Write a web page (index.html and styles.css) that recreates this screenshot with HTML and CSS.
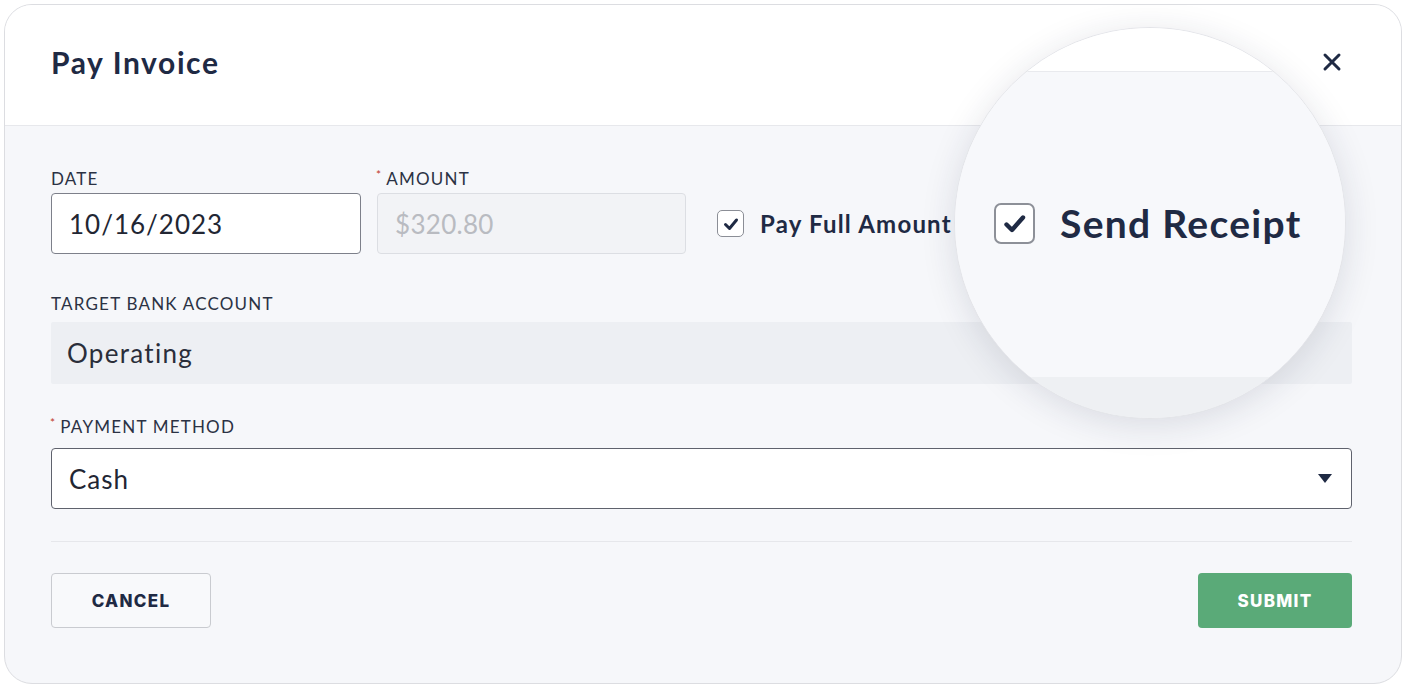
FILE: index.html
```html
<!DOCTYPE html>
<html>
<head>
<meta charset="utf-8">
<link rel="stylesheet" href="styles.css">
</head>
<body>
<div class="card">
  <header class="head">
    <h1 class="title">Pay Invoice</h1>
    <button class="close" aria-label="Close">
      <svg width="20" height="20" viewBox="0 0 20 20"><path d="M3 3L17 17M17 3L3 17" stroke="#1f2a44" stroke-width="3" stroke-linecap="round"/></svg>
    </button>
  </header>
  <main class="body">
    <div class="row1">
      <div class="field date">
        <div class="label">DATE</div>
        <div class="input">10/16/2023</div>
      </div>
      <div class="field amount">
        <div class="label"><span class="req">*</span>AMOUNT</div>
        <div class="input disabled">$320.80</div>
      </div>
      <div class="check">
        <span class="box">
          <svg width="20" height="20" viewBox="0 0 20 20"><path d="M4.5 10.5L8.5 14.5L15.5 6" fill="none" stroke="#1f2a44" stroke-width="3" stroke-linecap="round" stroke-linejoin="round"/></svg>
        </span>
        <span class="check-text">Pay Full Amount</span>
      </div>
    </div>
    <div class="field bank">
      <div class="label">TARGET BANK ACCOUNT</div>
      <div class="input readonly">Operating</div>
    </div>
    <div class="field method">
      <div class="label"><span class="req">*</span>PAYMENT METHOD</div>
      <div class="input select">
        <span>Cash</span>
        <svg width="14" height="9" viewBox="0 0 14 9"><path d="M0 0H14L7 9Z" fill="#1f2a44"/></svg>
      </div>
    </div>
    <div class="divider"></div>
    <div class="actions">
      <button class="btn cancel">CANCEL</button>
      <button class="btn submit">SUBMIT</button>
    </div>
  </main>
  <div class="magnifier">
    <div class="mag-head"></div>
    <div class="mag-body">
      <span class="mag-box">
        <svg width="30" height="30" viewBox="0 0 30 30"><path d="M6.5 15.5L12 21L23 8.5" fill="none" stroke="#1f2a44" stroke-width="4.4" stroke-linecap="round" stroke-linejoin="round"/></svg>
      </span>
      <span class="mag-text">Send Receipt</span>
    </div>
    <div class="mag-band"></div>
  </div>
</div>
</body>
</html>
```

FILE: styles.css
```css
* { box-sizing: border-box; }
html, body { margin: 0; padding: 0; background: #ffffff; }
body { font-family: Lato, "Open Sans", sans-serif; color: #1f2a44; }

.card {
  position: relative;
  margin: 4px;
  width: 1398px;
  height: 680px;
  border: 1px solid #dcdde1;
  border-radius: 28px;
  overflow: hidden;
  background: #f6f7fa;
}

.head {
  height: 121px;
  background: #ffffff;
  border-bottom: 1px solid #e7e8ec;
  display: flex;
  align-items: center;
  justify-content: space-between;
  padding: 0 59px 7px 46px;
}
.title {
  margin: 0;
  font-size: 30px;
  font-weight: 700;
  color: #1f2a44;
  letter-spacing: 1.6px;
}
.close {
  border: 0;
  background: none;
  padding: 0;
  width: 20px;
  height: 20px;
  display: flex;
}

.body {
  padding: 43px 49px 0 46px;
}

.label {
  font-size: 17px;
  line-height: 20px;
  color: #2b3244;
  letter-spacing: 1.2px;
}
.req {
  color: #c0392b;
  font-size: 12px;
  vertical-align: top;
  line-height: 12px;
  margin-right: 4px;
  margin-left: -1px;
}

.row1 {
  display: flex;
  align-items: flex-end;
}
.field .input {
  height: 61px;
  border-radius: 4px;
  display: flex;
  align-items: center;
  font-size: 26px;
  letter-spacing: 1px;
  color: #222633;
}
.date { width: 310px; }
.date .label { margin-bottom: 4px; }
.date .input {
  background: #fff;
  border: 1px solid #7d808a;
  padding-left: 17px;
}
.amount { width: 309px; margin-left: 16px; }
.amount .label { margin-bottom: 4px; }
.input.disabled {
  background: #f2f3f6;
  border: 1px solid #dcdee3;
  color: #b9bbc1;
  padding-left: 17px;
  letter-spacing: 0.3px;
}

.check {
  height: 61px;
  margin-left: 31px;
  display: flex;
  align-items: center;
}
.box {
  width: 27px;
  height: 27px;
  border: 1.5px solid #8b8e96;
  border-radius: 5px;
  background: #fff;
  display: flex;
  align-items: center;
  justify-content: center;
}
.check-text {
  margin-left: 16px;
  font-size: 24px;
  font-weight: 700;
  color: #1f2a44;
  letter-spacing: 1.2px;
}

.bank { margin-top: 40px; }
.bank .label { margin-bottom: 8px; }
.input.readonly {
  height: 62px;
  background: #edeff3;
  padding-left: 16px;
  border-radius: 2px;
  color: #2a2e3a;
  letter-spacing: 1.3px;
}

.method { margin-top: 33px; }
.method .label { margin-bottom: 11px; }
.input.select {
  background: #fff;
  border: 1px solid #5f626d;
  padding: 0 19px 0 17px;
  justify-content: space-between;
}

.divider {
  margin-top: 32px;
  height: 1px;
  background: #e6e7eb;
}

.actions {
  margin-top: 31px;
  display: flex;
  justify-content: space-between;
}
.btn {
  height: 55px;
  border-radius: 4px;
  font-family: Inter, "Open Sans", sans-serif;
  font-weight: 800;
  font-size: 17px;
  letter-spacing: 1.3px;
}
.cancel {
  width: 160px;
  background: #f8f9fb;
  border: 1px solid #c9cbd0;
  color: #1f2a44;
}
.submit {
  width: 154px;
  background: #5aaa78;
  border: 0;
  color: #ffffff;
}

.magnifier {
  position: absolute;
  left: 949px;
  top: 22px;
  width: 392px;
  height: 392px;
  border-radius: 50%;
  overflow: hidden;
  border: 1px solid #e3e4e8;
  background: #f6f7fa;
  box-shadow: 0 6px 34px rgba(30, 40, 70, 0.13);
  display: flex;
  flex-direction: column;
}
.mag-head {
  height: 44px;
  flex: none;
  background: #ffffff;
  border-bottom: 1px solid #e9eaee;
}
.mag-body {
  height: 305px;
  flex: none;
  background: #f7f8fb;
  display: flex;
  align-items: flex-start;
  padding: 131px 0 0 39px;
}
.mag-box {
  width: 41px;
  height: 41px;
  border: 2px solid #8d9098;
  border-radius: 7px;
  background: #fff;
  display: flex;
  align-items: center;
  justify-content: center;
}
.mag-text {
  margin-left: 25px;
  font-size: 39px;
  font-weight: 700;
  line-height: 41px;
  color: #1f2a44;
  letter-spacing: 1.3px;
}
.mag-band {
  flex: 1;
  background: #eef0f3;
}
```
